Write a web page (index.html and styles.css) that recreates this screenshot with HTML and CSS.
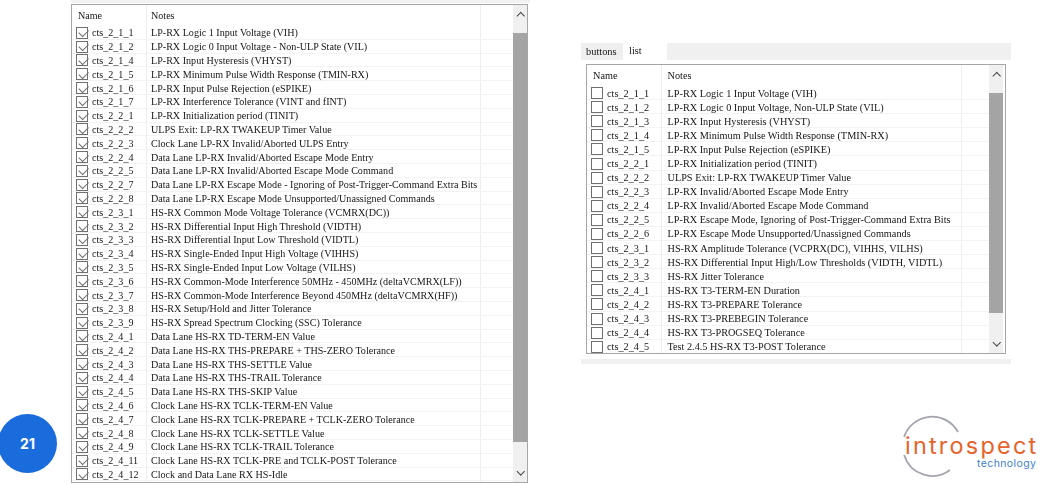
FILE: index.html
```html
<!DOCTYPE html>
<html lang="en">
<head>
<meta charset="utf-8">
<title>Test lists</title>
<link rel="stylesheet" href="styles.css">
</head>
<body>
<main class="page">
  <section class="panel-left">
    <div class="top-strip"></div>
    <div class="table table-left">
      <div class="list">
        <div class="head"><span class="col-name">Name</span><span class="col-notes">Notes</span></div>
        <div class="row"><span class="check on"></span><span class="name">cts_2_1_1</span><span class="note">LP-RX Logic 1 Input Voltage (VIH)</span></div>
        <div class="row"><span class="check on"></span><span class="name">cts_2_1_2</span><span class="note">LP-RX Logic 0 Input Voltage - Non-ULP State (VIL)</span></div>
        <div class="row"><span class="check on"></span><span class="name">cts_2_1_4</span><span class="note">LP-RX Input Hysteresis (VHYST)</span></div>
        <div class="row"><span class="check on"></span><span class="name">cts_2_1_5</span><span class="note">LP-RX Minimum Pulse Width Response (TMIN-RX)</span></div>
        <div class="row"><span class="check on"></span><span class="name">cts_2_1_6</span><span class="note">LP-RX Input Pulse Rejection (eSPIKE)</span></div>
        <div class="row"><span class="check on"></span><span class="name">cts_2_1_7</span><span class="note">LP-RX Interference Tolerance (VINT and fINT)</span></div>
        <div class="row"><span class="check on"></span><span class="name">cts_2_2_1</span><span class="note">LP-RX Initialization period (TINIT)</span></div>
        <div class="row"><span class="check on"></span><span class="name">cts_2_2_2</span><span class="note">ULPS Exit: LP-RX TWAKEUP Timer Value</span></div>
        <div class="row"><span class="check on"></span><span class="name">cts_2_2_3</span><span class="note">Clock Lane LP-RX Invalid/Aborted ULPS Entry</span></div>
        <div class="row"><span class="check on"></span><span class="name">cts_2_2_4</span><span class="note">Data Lane LP-RX Invalid/Aborted Escape Mode Entry</span></div>
        <div class="row"><span class="check on"></span><span class="name">cts_2_2_5</span><span class="note">Data Lane LP-RX Invalid/Aborted Escape Mode Command</span></div>
        <div class="row"><span class="check on"></span><span class="name">cts_2_2_7</span><span class="note">Data Lane LP-RX Escape Mode - Ignoring of Post-Trigger-Command Extra Bits</span></div>
        <div class="row"><span class="check on"></span><span class="name">cts_2_2_8</span><span class="note">Data Lane LP-RX Escape Mode Unsupported/Unassigned Commands</span></div>
        <div class="row"><span class="check on"></span><span class="name">cts_2_3_1</span><span class="note">HS-RX Common Mode Voltage Tolerance (VCMRX(DC))</span></div>
        <div class="row"><span class="check on"></span><span class="name">cts_2_3_2</span><span class="note">HS-RX Differential Input High Threshold (VIDTH)</span></div>
        <div class="row"><span class="check on"></span><span class="name">cts_2_3_3</span><span class="note">HS-RX Differential Input Low Threshold (VIDTL)</span></div>
        <div class="row"><span class="check on"></span><span class="name">cts_2_3_4</span><span class="note">HS-RX Single-Ended Input High Voltage (VIHHS)</span></div>
        <div class="row"><span class="check on"></span><span class="name">cts_2_3_5</span><span class="note">HS-RX Single-Ended Input Low Voltage (VILHS)</span></div>
        <div class="row"><span class="check on"></span><span class="name">cts_2_3_6</span><span class="note">HS-RX Common-Mode Interference 50MHz - 450MHz (deltaVCMRX(LF))</span></div>
        <div class="row"><span class="check on"></span><span class="name">cts_2_3_7</span><span class="note">HS-RX Common-Mode Interference Beyond 450MHz (deltaVCMRX(HF))</span></div>
        <div class="row"><span class="check on"></span><span class="name">cts_2_3_8</span><span class="note">HS-RX Setup/Hold and Jitter Tolerance</span></div>
        <div class="row"><span class="check on"></span><span class="name">cts_2_3_9</span><span class="note">HS-RX Spread Spectrum Clocking (SSC) Tolerance</span></div>
        <div class="row"><span class="check on"></span><span class="name">cts_2_4_1</span><span class="note">Data Lane HS-RX TD-TERM-EN Value</span></div>
        <div class="row"><span class="check on"></span><span class="name">cts_2_4_2</span><span class="note">Data Lane HS-RX THS-PREPARE + THS-ZERO Tolerance</span></div>
        <div class="row"><span class="check on"></span><span class="name">cts_2_4_3</span><span class="note">Data Lane HS-RX THS-SETTLE Value</span></div>
        <div class="row"><span class="check on"></span><span class="name">cts_2_4_4</span><span class="note">Data Lane HS-RX THS-TRAIL Tolerance</span></div>
        <div class="row"><span class="check on"></span><span class="name">cts_2_4_5</span><span class="note">Data Lane HS-RX THS-SKIP Value</span></div>
        <div class="row"><span class="check on"></span><span class="name">cts_2_4_6</span><span class="note">Clock Lane HS-RX TCLK-TERM-EN Value</span></div>
        <div class="row"><span class="check on"></span><span class="name">cts_2_4_7</span><span class="note">Clock Lane HS-RX TCLK-PREPARE + TCLK-ZERO Tolerance</span></div>
        <div class="row"><span class="check on"></span><span class="name">cts_2_4_8</span><span class="note">Clock Lane HS-RX TCLK-SETTLE Value</span></div>
        <div class="row"><span class="check on"></span><span class="name">cts_2_4_9</span><span class="note">Clock Lane HS-RX TCLK-TRAIL Tolerance</span></div>
        <div class="row"><span class="check on"></span><span class="name">cts_2_4_11</span><span class="note">Clock Lane HS-RX TCLK-PRE and TCLK-POST Tolerance</span></div>
        <div class="row"><span class="check on"></span><span class="name">cts_2_4_12</span><span class="note">Clock and Data Lane RX HS-Idle</span></div>
      </div>
      <div class="scrollbar scrollbar-left">
        <span class="arrow up"></span>
        <span class="thumb thumb-left"></span>
        <span class="arrow down"></span>
      </div>
    </div>
  </section>

  <section class="panel-right">
    <div class="tabs">
      <span class="tab tab-off">buttons</span>
      <span class="tab tab-on">list</span>
      <span class="tab-fill"></span>
    </div>
    <div class="table table-right">
      <div class="list">
        <div class="head"><span class="col-name">Name</span><span class="col-notes">Notes</span></div>
        <div class="row"><span class="check"></span><span class="name">cts_2_1_1</span><span class="note">LP-RX Logic 1 Input Voltage (VIH)</span></div>
        <div class="row"><span class="check"></span><span class="name">cts_2_1_2</span><span class="note">LP-RX Logic 0 Input Voltage, Non-ULP State (VIL)</span></div>
        <div class="row"><span class="check"></span><span class="name">cts_2_1_3</span><span class="note">LP-RX Input Hysteresis (VHYST)</span></div>
        <div class="row"><span class="check"></span><span class="name">cts_2_1_4</span><span class="note">LP-RX Minimum Pulse Width Response (TMIN-RX)</span></div>
        <div class="row"><span class="check"></span><span class="name">cts_2_1_5</span><span class="note">LP-RX Input Pulse Rejection (eSPIKE)</span></div>
        <div class="row"><span class="check"></span><span class="name">cts_2_2_1</span><span class="note">LP-RX Initialization period (TINIT)</span></div>
        <div class="row"><span class="check"></span><span class="name">cts_2_2_2</span><span class="note">ULPS Exit: LP-RX TWAKEUP Timer Value</span></div>
        <div class="row"><span class="check"></span><span class="name">cts_2_2_3</span><span class="note">LP-RX Invalid/Aborted Escape Mode Entry</span></div>
        <div class="row"><span class="check"></span><span class="name">cts_2_2_4</span><span class="note">LP-RX Invalid/Aborted Escape Mode Command</span></div>
        <div class="row"><span class="check"></span><span class="name">cts_2_2_5</span><span class="note">LP-RX Escape Mode, Ignoring of Post-Trigger-Command Extra Bits</span></div>
        <div class="row"><span class="check"></span><span class="name">cts_2_2_6</span><span class="note">LP-RX Escape Mode Unsupported/Unassigned Commands</span></div>
        <div class="row"><span class="check"></span><span class="name">cts_2_3_1</span><span class="note">HS-RX Amplitude Tolerance (VCPRX(DC), VIHHS, VILHS)</span></div>
        <div class="row"><span class="check"></span><span class="name">cts_2_3_2</span><span class="note">HS-RX Differential Input High/Low Thresholds (VIDTH, VIDTL)</span></div>
        <div class="row"><span class="check"></span><span class="name">cts_2_3_3</span><span class="note">HS-RX Jitter Tolerance</span></div>
        <div class="row"><span class="check"></span><span class="name">cts_2_4_1</span><span class="note">HS-RX T3-TERM-EN Duration</span></div>
        <div class="row"><span class="check"></span><span class="name">cts_2_4_2</span><span class="note">HS-RX T3-PREPARE Tolerance</span></div>
        <div class="row"><span class="check"></span><span class="name">cts_2_4_3</span><span class="note">HS-RX T3-PREBEGIN Tolerance</span></div>
        <div class="row"><span class="check"></span><span class="name">cts_2_4_4</span><span class="note">HS-RX T3-PROGSEQ Tolerance</span></div>
        <div class="row"><span class="check"></span><span class="name">cts_2_4_5</span><span class="note">Test 2.4.5 HS-RX T3-POST Tolerance</span></div>
      </div>
      <div class="scrollbar scrollbar-right">
        <span class="arrow up"></span>
        <span class="thumb thumb-right"></span>
        <span class="arrow down"></span>
      </div>
    </div>
    <div class="bottom-strip"></div>
  </section>

  <div class="badge">21</div>

  <div class="logo">
    <svg class="logo-ring" width="70" height="70" viewBox="0 0 70 70" aria-hidden="true">
      <path d="M4.1 25 A29.5 29.5 0 0 1 58 20" fill="none" stroke="#a3a5ad" stroke-width="1.8"/>
      <path d="M4.1 43 A29.5 29.5 0 0 0 50 58" fill="none" stroke="#a3a5ad" stroke-width="1.8"/>
    </svg>
    <span class="logo-name">introspect</span>
    <span class="logo-sub">technology</span>
  </div>
</main>
</body>
</html>
```

FILE: styles.css
```css
* {
  box-sizing: border-box;
}

html,
body {
  margin: 0;
  height: 100%;
  background: #fff;
}

.page {
  position: relative;
  display: flex;
  align-items: flex-start;
  width: 1049px;
  height: 485px;
  overflow: hidden;
  font-family: "Liberation Serif", serif;
  color: #151515;
}

.panel-left {
  width: 459px;
  margin-left: 71px;
  filter: blur(0.3px);
}

.top-strip {
  height: 3px;
  margin-bottom: 1px;
  background: #f1f1f1;
}

.panel-right {
  width: 430px;
  margin-left: 51px;
  margin-top: 43px;
  filter: blur(0.3px);
}

.tabs {
  display: flex;
  height: 17px;
  font-size: 10.4px;
  line-height: 17px;
}

.tab {
  padding: 0 5px;
}

.tab-off {
  width: 42px;
  background: #efefef;
}

.tab-on {
  width: 44px;
  padding-left: 6px;
  line-height: 15px;
  background: #fff;
}

.tab-fill {
  flex: 1;
  background: #f0f0f0;
}

.bottom-strip {
  height: 5px;
  margin-top: 5px;
  background: #f0f0f0;
}

.table {
  display: flex;
  border: 1px solid #a6a6a6;
  background: #fff;
}

.table-left {
  --row: 13.81px;
  --name-w: 74px;
  --notes-w: 334px;
  --note-pad: 5px;
  --bar-gap: 0px;
  --text: 10.1px;
  width: 457px;
  height: 479px;
}

.table-right {
  --row: 14.1px;
  --name-w: 74px;
  --notes-w: 300px;
  --note-pad: 6.5px;
  --bar-gap: 2px;
  --text: 10.25px;
  width: 420px;
  height: 290px;
  margin-left: 5px;
  margin-top: 4px;
}

.list {
  flex: 1;
  min-width: 0;
  overflow: hidden;
  background:
    linear-gradient(#eee, #eee) calc(var(--name-w)) 0 / 1px 100% no-repeat,
    linear-gradient(#eee, #eee) calc(var(--name-w) + var(--notes-w)) 0 / 1px 100% no-repeat;
}

.head {
  display: flex;
  align-items: center;
  height: 21px;
  font-size: var(--text);
}

.col-name {
  width: var(--name-w);
  padding-left: 6px;
}

.col-notes {
  padding-left: var(--note-pad);
}

.row {
  display: flex;
  align-items: center;
  height: var(--row);
  font-size: var(--text);
  line-height: 13px;
  white-space: nowrap;
  box-shadow: inset 0 -1px 0 #f3f3f3;
}

.check {
  position: relative;
  flex: none;
  width: 12px;
  height: 12px;
  margin-left: 4px;
  border: 1px solid #707070;
  background: #fff;
}

.check.on::after {
  content: "";
  position: absolute;
  left: 1.5px;
  top: 1.5px;
  width: 8px;
  height: 4.5px;
  border-left: 1.3px solid #6c6c6c;
  border-bottom: 1.3px solid #6c6c6c;
  transform: rotate(-45deg);
}

.name {
  flex: none;
  width: 58px;
  padding-left: 4px;
}

.note {
  padding-left: var(--note-pad);
}

.scrollbar {
  flex: none;
  display: flex;
  flex-direction: column;
  width: 14px;
  margin-right: var(--bar-gap);
  background: #f0f0f0;
}

.arrow {
  position: relative;
  flex: none;
  height: 18px;
}

.arrow::after {
  content: "";
  position: absolute;
  left: 5px;
  width: 4.5px;
  height: 4.5px;
  border-left: 1.8px solid #454545;
  border-top: 1.8px solid #454545;
}

.arrow.up::after {
  top: 8px;
  transform: rotate(45deg);
}

.arrow.down::after {
  top: 5px;
  transform: rotate(225deg);
}

.thumb {
  flex: none;
  background: #a4a4a4;
}

.thumb-left {
  height: 409px;
  margin-top: 10px;
  margin-bottom: auto;
}

.thumb-right {
  height: 220px;
  margin-top: 10px;
  margin-bottom: auto;
}

.badge {
  position: absolute;
  left: -2px;
  top: 414px;
  width: 59px;
  height: 59px;
  display: flex;
  align-items: center;
  justify-content: center;
  border-radius: 50%;
  background: #1a6bdc;
  color: #fff;
  font-family: Inter, "Liberation Sans", sans-serif;
  font-weight: 700;
  font-size: 14px;
}

.logo {
  position: absolute;
  left: 900px;
  top: 412px;
  width: 145px;
  height: 70px;
}

.logo-ring {
  position: absolute;
  left: 0;
  top: 0;
}

.logo-name {
  position: absolute;
  left: 5px;
  top: 22px;
  font-family: Inter, "Open Sans", sans-serif;
  font-weight: 400;
  font-size: 23.5px;
  line-height: 24px;
  letter-spacing: 2.2px;
  color: #e8622c;
}

.logo-sub {
  position: absolute;
  left: 77px;
  top: 46px;
  font-family: Inter, "Open Sans", sans-serif;
  font-weight: 400;
  font-size: 10.5px;
  line-height: 12px;
  letter-spacing: 0.4px;
  color: #3f7fd0;
}
```
